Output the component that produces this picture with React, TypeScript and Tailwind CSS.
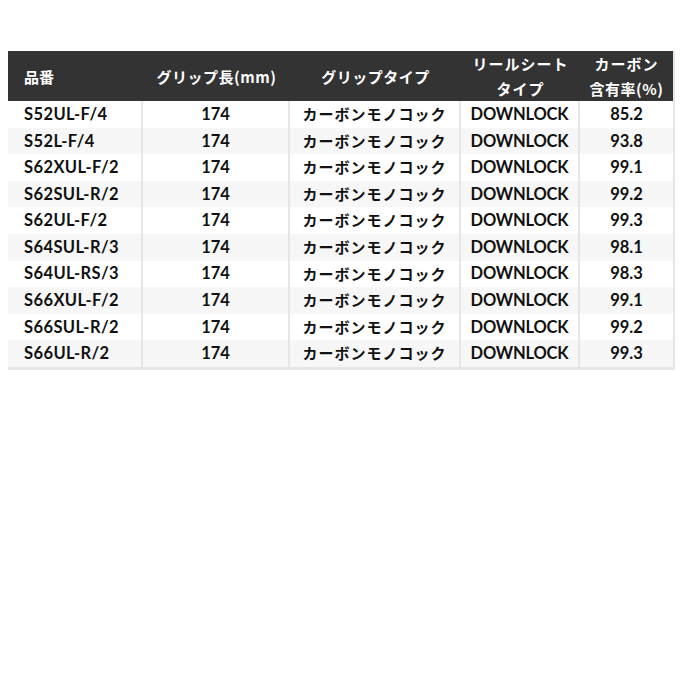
import React from "react";

const rows = [
  ["S52UL-F/4", "174", "85.2"],
  ["S52L-F/4", "174", "93.8"],
  ["S62XUL-F/2", "174", "99.1"],
  ["S62SUL-R/2", "174", "99.2"],
  ["S62UL-F/2", "174", "99.3"],
  ["S64SUL-R/3", "174", "98.1"],
  ["S64UL-RS/3", "174", "98.3"],
  ["S66XUL-F/2", "174", "99.1"],
  ["S66SUL-R/2", "174", "99.2"],
  ["S66UL-R/2", "174", "99.3"],
];

export default function App() {
  return (
    <div
      className="w-[680px] h-[680px] bg-white pt-[51px] pl-[8px]"
      style={{ fontFamily: 'Lato, "Noto Sans CJK JP", sans-serif' }}
    >
      <div className="w-[667px] border-r-2 border-b-[3px] border-[#e6e6e6]">
        <div
          className="flex h-[50px] bg-[#333333] text-white font-bold text-[15px] leading-[25px]"
          style={{ fontFamily: '"Noto Sans CJK JP", sans-serif' }}
        >
          <div className="w-[135px] flex items-center pl-[16px]">品番</div>
          <div className="w-[147px] flex items-center justify-center tracking-[0.5px]">グリップ長(mm)</div>
          <div className="w-[171px] flex items-center justify-center tracking-[0.5px]">グリップタイプ</div>
          <div className="w-[119px] flex flex-col items-center justify-center tracking-[1px]">
            <span>リールシート</span>
            <span>タイプ</span>
          </div>
          <div className="w-[93px] flex flex-col items-center justify-center">
            <span className="tracking-[1px]">カーボン</span>
            <span className="tracking-[0.5px]">含有率(%)</span>
          </div>
        </div>
        {rows.map((r, i) => (
          <div
            key={i}
            className={`flex h-[26.6px] text-[16.5px] font-bold text-[#111111] ${
              i % 2 === 1 ? "bg-[#f7f7f7]" : "bg-white"
            }`}
          >
            <div className="w-[135px] border-r-2 border-[#e6e6e6] flex items-center pl-[16px] tracking-[0.4px]">{r[0]}</div>
            <div className="w-[147px] border-r-2 border-[#e6e6e6] flex items-center justify-center">{r[1]}</div>
            <div
              className="w-[171px] border-r-2 border-[#e6e6e6] flex items-center justify-center text-[15px] tracking-[1px]"
              style={{ fontFamily: '"Noto Sans CJK JP", sans-serif' }}
            >
              カーボンモノコック
            </div>
            <div className="w-[119px] border-r-2 border-[#e6e6e6] flex items-center justify-center tracking-[-0.2px]">DOWNLOCK</div>
            <div className="w-[93px] flex items-center justify-center">{r[2]}</div>
          </div>
        ))}
      </div>
    </div>
  );
}
